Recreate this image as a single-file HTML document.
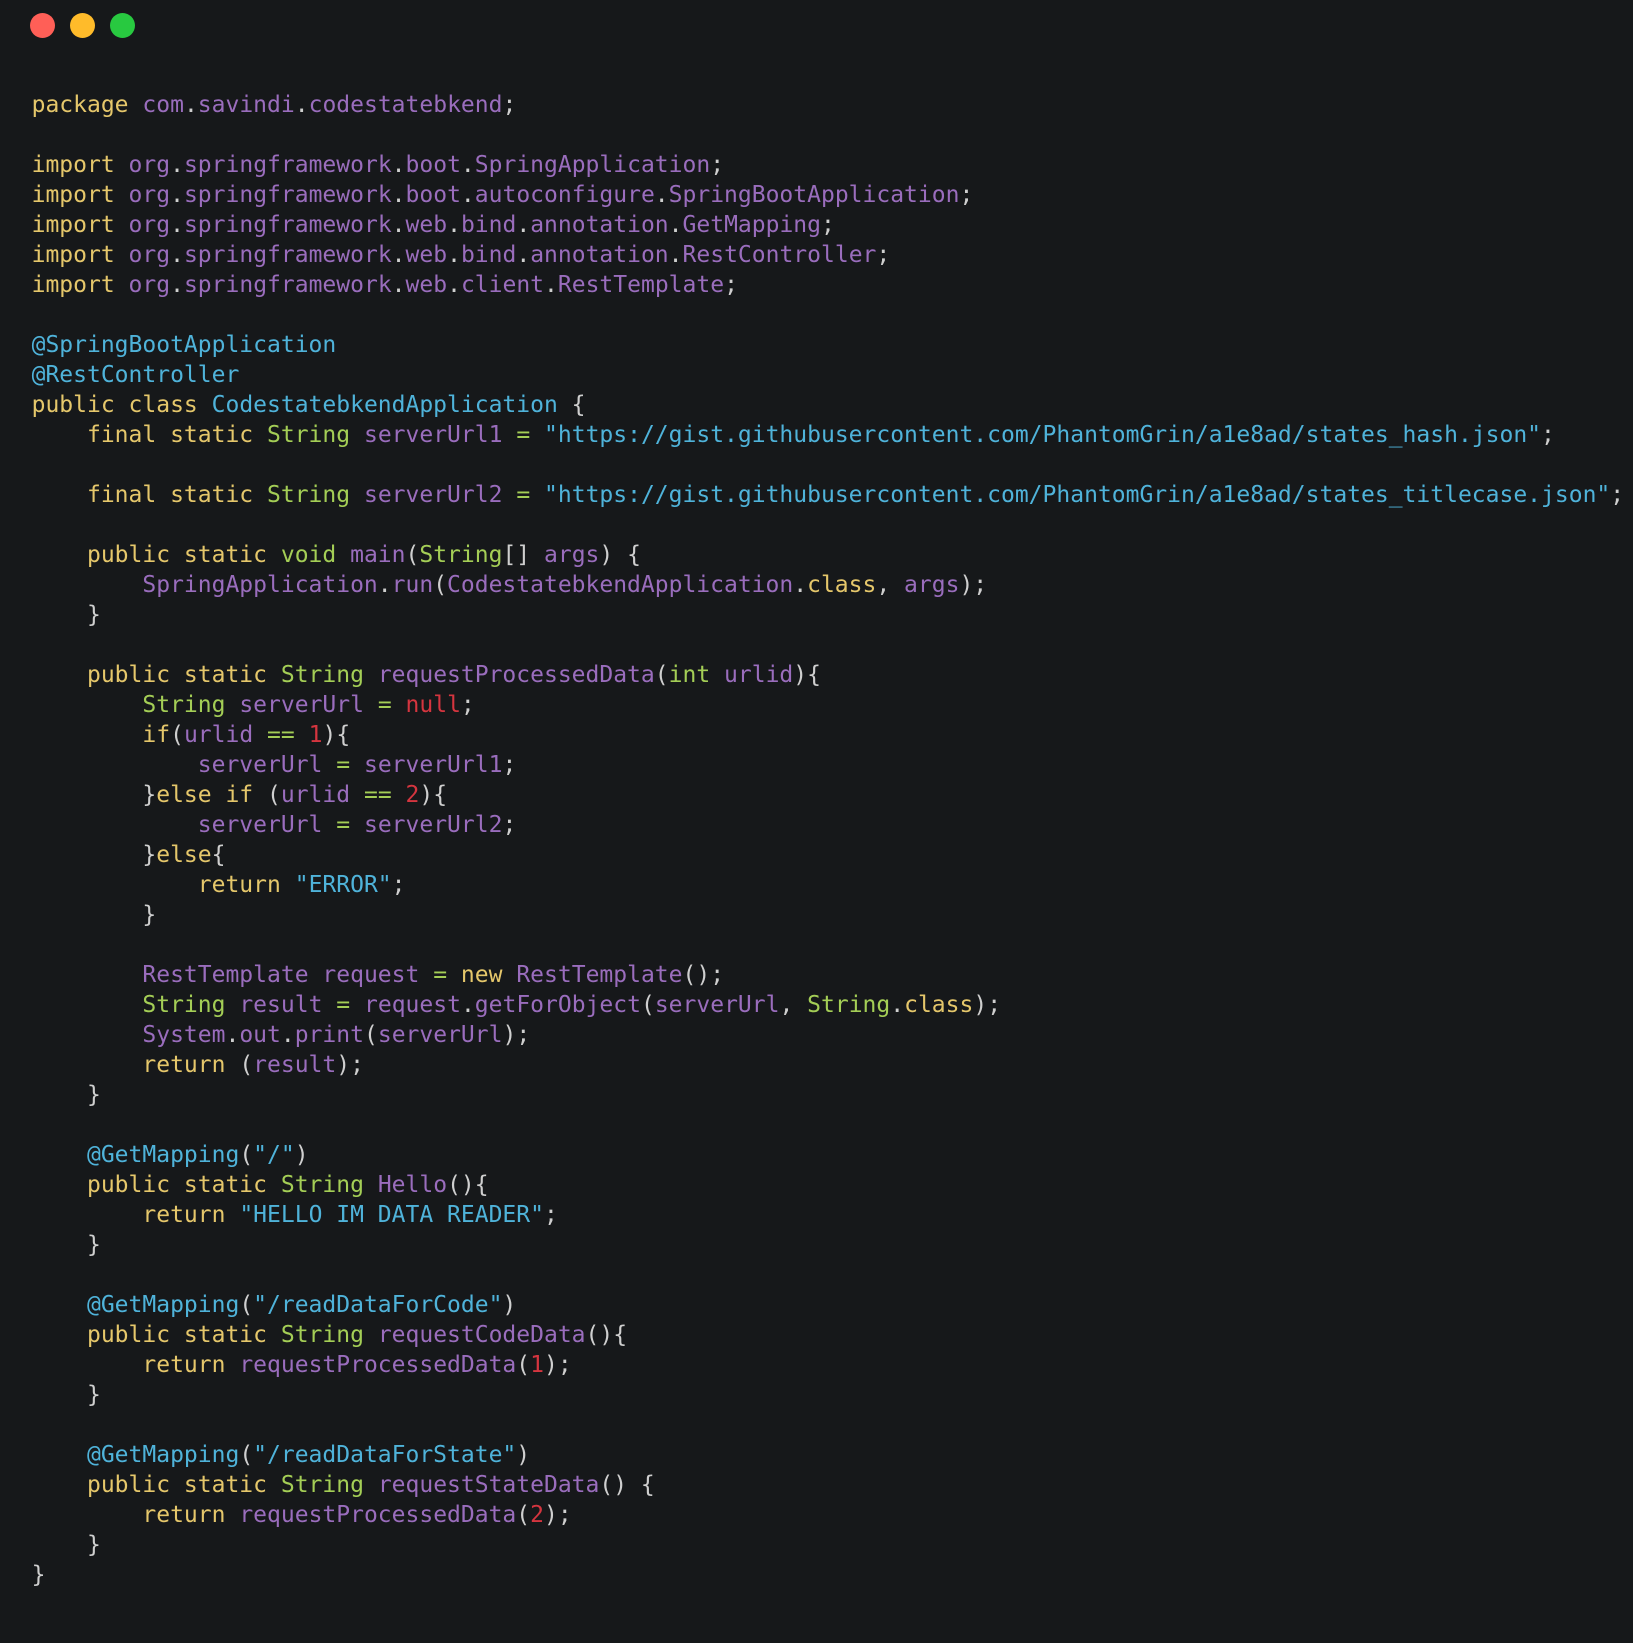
<!DOCTYPE html>
<html><head><meta charset="utf-8"><style>
html,body{margin:0;padding:0;background:#16181a}
body{width:1633px;height:1643px;position:relative;overflow:hidden}
.d{position:absolute;top:13.2px;width:25px;height:25px;border-radius:50%}
pre{position:absolute;left:31.6px;top:90px;margin:0;font:23px/30px "DejaVu Sans Mono",monospace;color:#cfcfcf;white-space:pre}
b{font-weight:normal;color:#e5c76b}
i{font-style:normal;color:#9a6dbd}
u{text-decoration:none;color:#a4ce56}
s{text-decoration:none;color:#4fb3da}
em{font-style:normal;color:#d5353f}
</style></head><body>
<div class="d" style="left:29.5px;background:#ff5f57"></div>
<div class="d" style="left:69.5px;background:#ffbb2a"></div>
<div class="d" style="left:109.5px;background:#28c940"></div>
<pre><b>package</b> <i>com</i>.<i>savindi</i>.<i>codestatebkend</i>;

<b>import</b> <i>org</i>.<i>springframework</i>.<i>boot</i>.<i>SpringApplication</i>;
<b>import</b> <i>org</i>.<i>springframework</i>.<i>boot</i>.<i>autoconfigure</i>.<i>SpringBootApplication</i>;
<b>import</b> <i>org</i>.<i>springframework</i>.<i>web</i>.<i>bind</i>.<i>annotation</i>.<i>GetMapping</i>;
<b>import</b> <i>org</i>.<i>springframework</i>.<i>web</i>.<i>bind</i>.<i>annotation</i>.<i>RestController</i>;
<b>import</b> <i>org</i>.<i>springframework</i>.<i>web</i>.<i>client</i>.<i>RestTemplate</i>;

<s>@SpringBootApplication</s>
<s>@RestController</s>
<b>public class</b> <s>CodestatebkendApplication</s> {
    <b>final static</b> <u>String</u> <i>serverUrl1</i> <u>=</u> <s>"https://gist.githubusercontent.com/PhantomGrin/a1e8ad/states_hash.json"</s>;

    <b>final static</b> <u>String</u> <i>serverUrl2</i> <u>=</u> <s>"https://gist.githubusercontent.com/PhantomGrin/a1e8ad/states_titlecase.json"</s>;

    <b>public static</b> <u>void</u> <i>main</i>(<u>String</u>[] <i>args</i>) {
        <i>SpringApplication</i>.<i>run</i>(<i>CodestatebkendApplication</i>.<b>class</b>, <i>args</i>);
    }

    <b>public static</b> <u>String</u> <i>requestProcessedData</i>(<u>int</u> <i>urlid</i>){
        <u>String</u> <i>serverUrl</i> <u>=</u> <em>null</em>;
        <b>if</b>(<i>urlid</i> <u>==</u> <em>1</em>){
            <i>serverUrl</i> <u>=</u> <i>serverUrl1</i>;
        }<b>else if</b> (<i>urlid</i> <u>==</u> <em>2</em>){
            <i>serverUrl</i> <u>=</u> <i>serverUrl2</i>;
        }<b>else</b>{
            <b>return</b> <s>"ERROR"</s>;
        }

        <i>RestTemplate</i> <i>request</i> <u>=</u> <b>new</b> <i>RestTemplate</i>();
        <u>String</u> <i>result</i> <u>=</u> <i>request</i>.<i>getForObject</i>(<i>serverUrl</i>, <u>String</u>.<b>class</b>);
        <i>System</i>.<i>out</i>.<i>print</i>(<i>serverUrl</i>);
        <b>return</b> (<i>result</i>);
    }

    <s>@GetMapping</s>(<s>"/"</s>)
    <b>public static</b> <u>String</u> <i>Hello</i>(){
        <b>return</b> <s>"HELLO IM DATA READER"</s>;
    }

    <s>@GetMapping</s>(<s>"/readDataForCode"</s>)
    <b>public static</b> <u>String</u> <i>requestCodeData</i>(){
        <b>return</b> <i>requestProcessedData</i>(<em>1</em>);
    }

    <s>@GetMapping</s>(<s>"/readDataForState"</s>)
    <b>public static</b> <u>String</u> <i>requestStateData</i>() {
        <b>return</b> <i>requestProcessedData</i>(<em>2</em>);
    }
}</pre>
</body></html>
